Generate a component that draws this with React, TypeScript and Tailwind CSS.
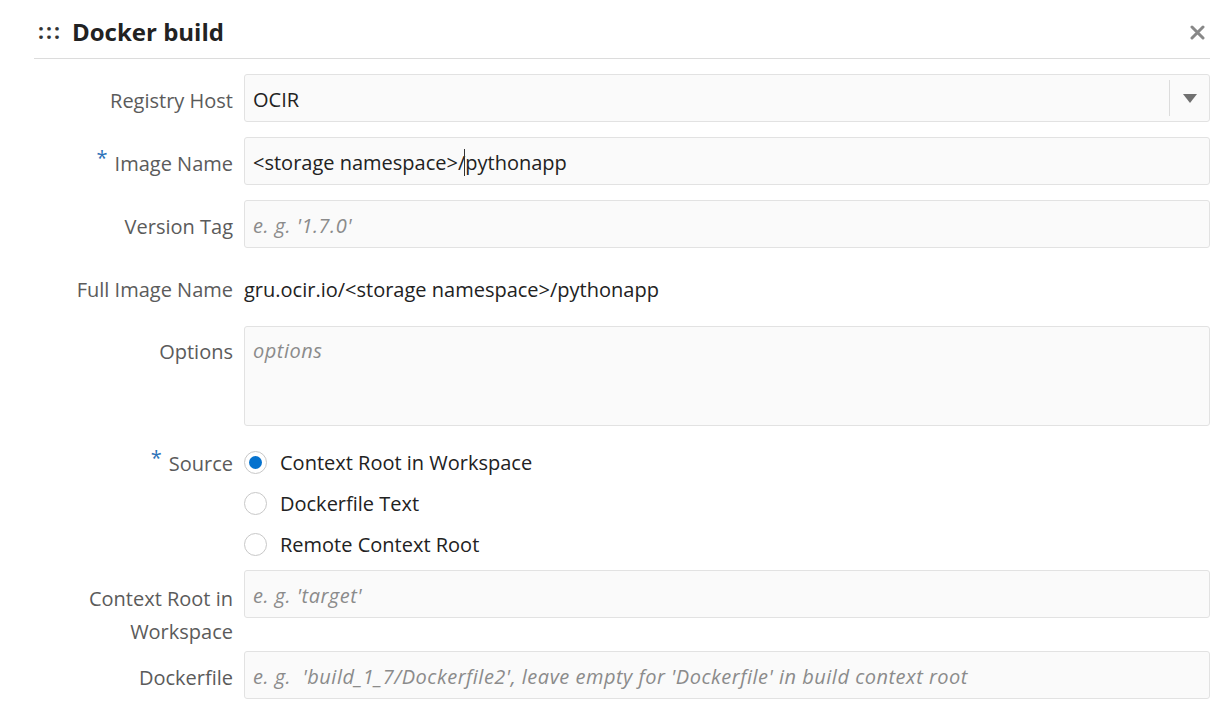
import React from "react";

const font = { fontFamily: '"Open Sans", "Noto Sans", sans-serif' };

function Label({ children, required, className = "" }: { children: React.ReactNode; required?: boolean; className?: string }) {
  return (
    <div className={"w-[210px] shrink-0 pr-[11px] text-right text-[20px] leading-[33px] text-[#5b5b5b] " + className}>
      {required && <span className="mr-[7px] align-[6px] text-[20px] leading-none text-[#2c72b8]">*</span>}
      {children}
    </div>
  );
}

function Input({ placeholder, value, cursor }: { placeholder?: string; value?: string; cursor?: boolean }) {
  return (
    <div className="flex h-[48px] flex-1 items-center rounded-[3px] border border-[#e2e2e2] bg-[#fafafa] px-[8px] pt-[4px] text-[20px]">
      {value ? (
        cursor ? (
          <span className="text-[#222]">
            &lt;storage namespace&gt;/<span className="ml-[-1px] border-l border-[#333]">pythonapp</span>
          </span>
        ) : (
          <span className="text-[#222]">{value}</span>
        )
      ) : (
        <span className="whitespace-pre italic tracking-[0.5px] text-[#8b8b8b]">{placeholder}</span>
      )}
    </div>
  );
}

function Radio({ checked, label }: { checked?: boolean; label: string }) {
  return (
    <div className="flex h-[41px] items-center">
      <div className="flex h-[23px] w-[23px] items-center justify-center rounded-full border-[1.5px] border-[#c8c8c8] bg-white">
        {checked && <div className="h-[13px] w-[13px] rounded-full bg-[#0572ce]" />}
      </div>
      <span className="ml-[13px] text-[20px] text-[#222]">{label}</span>
    </div>
  );
}

export default function App() {
  return (
    <div className="min-h-[719px] w-full bg-white" style={font}>
      <div className="ml-[34px] mr-[13px]">
        <div className="flex h-[59px] items-center border-b border-[#dcdcdc] pt-[6px]">
          <span className="ml-[4px] mr-[10px] text-[21px] font-bold tracking-[2px] text-[#333]">:::</span>
          <span className="text-[24px] font-bold text-[#222]">Docker build</span>
          <svg className="ml-auto mr-[5px]" width="15" height="15" viewBox="0 0 15 15">
            <path d="M2 2L13 13M13 2L2 13" stroke="#888" strokeWidth="3" strokeLinecap="round" />
          </svg>
        </div>

        <div className="mt-[15px] flex flex-col">
          <div className="flex items-center">
            <Label className="pt-[4px]">Registry Host</Label>
            <div className="flex h-[48px] flex-1 items-center rounded-[3px] border border-[#e2e2e2] bg-[#fafafa] pl-[8px] text-[20px] text-[#222]">
              <span className="flex-1 pt-[4px]">OCIR</span>
              <div className="flex h-[36px] w-[40px] items-center justify-center border-l border-[#dcdcdc]">
                <svg width="14" height="9" viewBox="0 0 14 9"><path d="M0 0h14L7 9z" fill="#707070" /></svg>
              </div>
            </div>
          </div>

          <div className="mt-[15px] flex items-center">
            <Label required className="pt-[5px]">Image Name</Label>
            <Input value="x" cursor />
          </div>

          <div className="mt-[15px] flex items-center">
            <Label className="pt-[4px]">Version Tag</Label>
            <Input placeholder="e. g. '1.7.0'" />
          </div>

          <div className="mt-[25px] flex items-center">
            <Label>Full Image Name</Label>
            <span className="text-[20px] text-[#222]">gru.ocir.io/&lt;storage namespace&gt;/pythonapp</span>
          </div>

          <div className="mt-[20px] flex items-start">
            <Label className="pt-[9px]">Options</Label>
            <div className="h-[100px] flex-1 rounded-[3px] border border-[#e2e2e2] bg-[#fafafa] px-[8px] pt-[9px] text-[20px] italic tracking-[0.5px] text-[#8b8b8b]">
              options
            </div>
          </div>

          <div className="mt-[16px] flex items-start">
            <Label required className="pt-[5px]">Source</Label>
            <div className="flex flex-col">
              <Radio checked label="Context Root in Workspace" />
              <Radio label="Dockerfile Text" />
              <Radio label="Remote Context Root" />
            </div>
          </div>

          <div className="mt-[5px] flex items-start">
            <Label className="pt-[12px]">Context Root in Workspace</Label>
            <Input placeholder="e. g. 'target'" />
          </div>

          <div className="mt-[3px] flex items-center">
            <Label className="pt-[4px]">Dockerfile</Label>
            <Input placeholder="e. g.  'build_1_7/Dockerfile2', leave empty for 'Dockerfile' in build context root" />
          </div>
        </div>
      </div>
    </div>
  );
}
